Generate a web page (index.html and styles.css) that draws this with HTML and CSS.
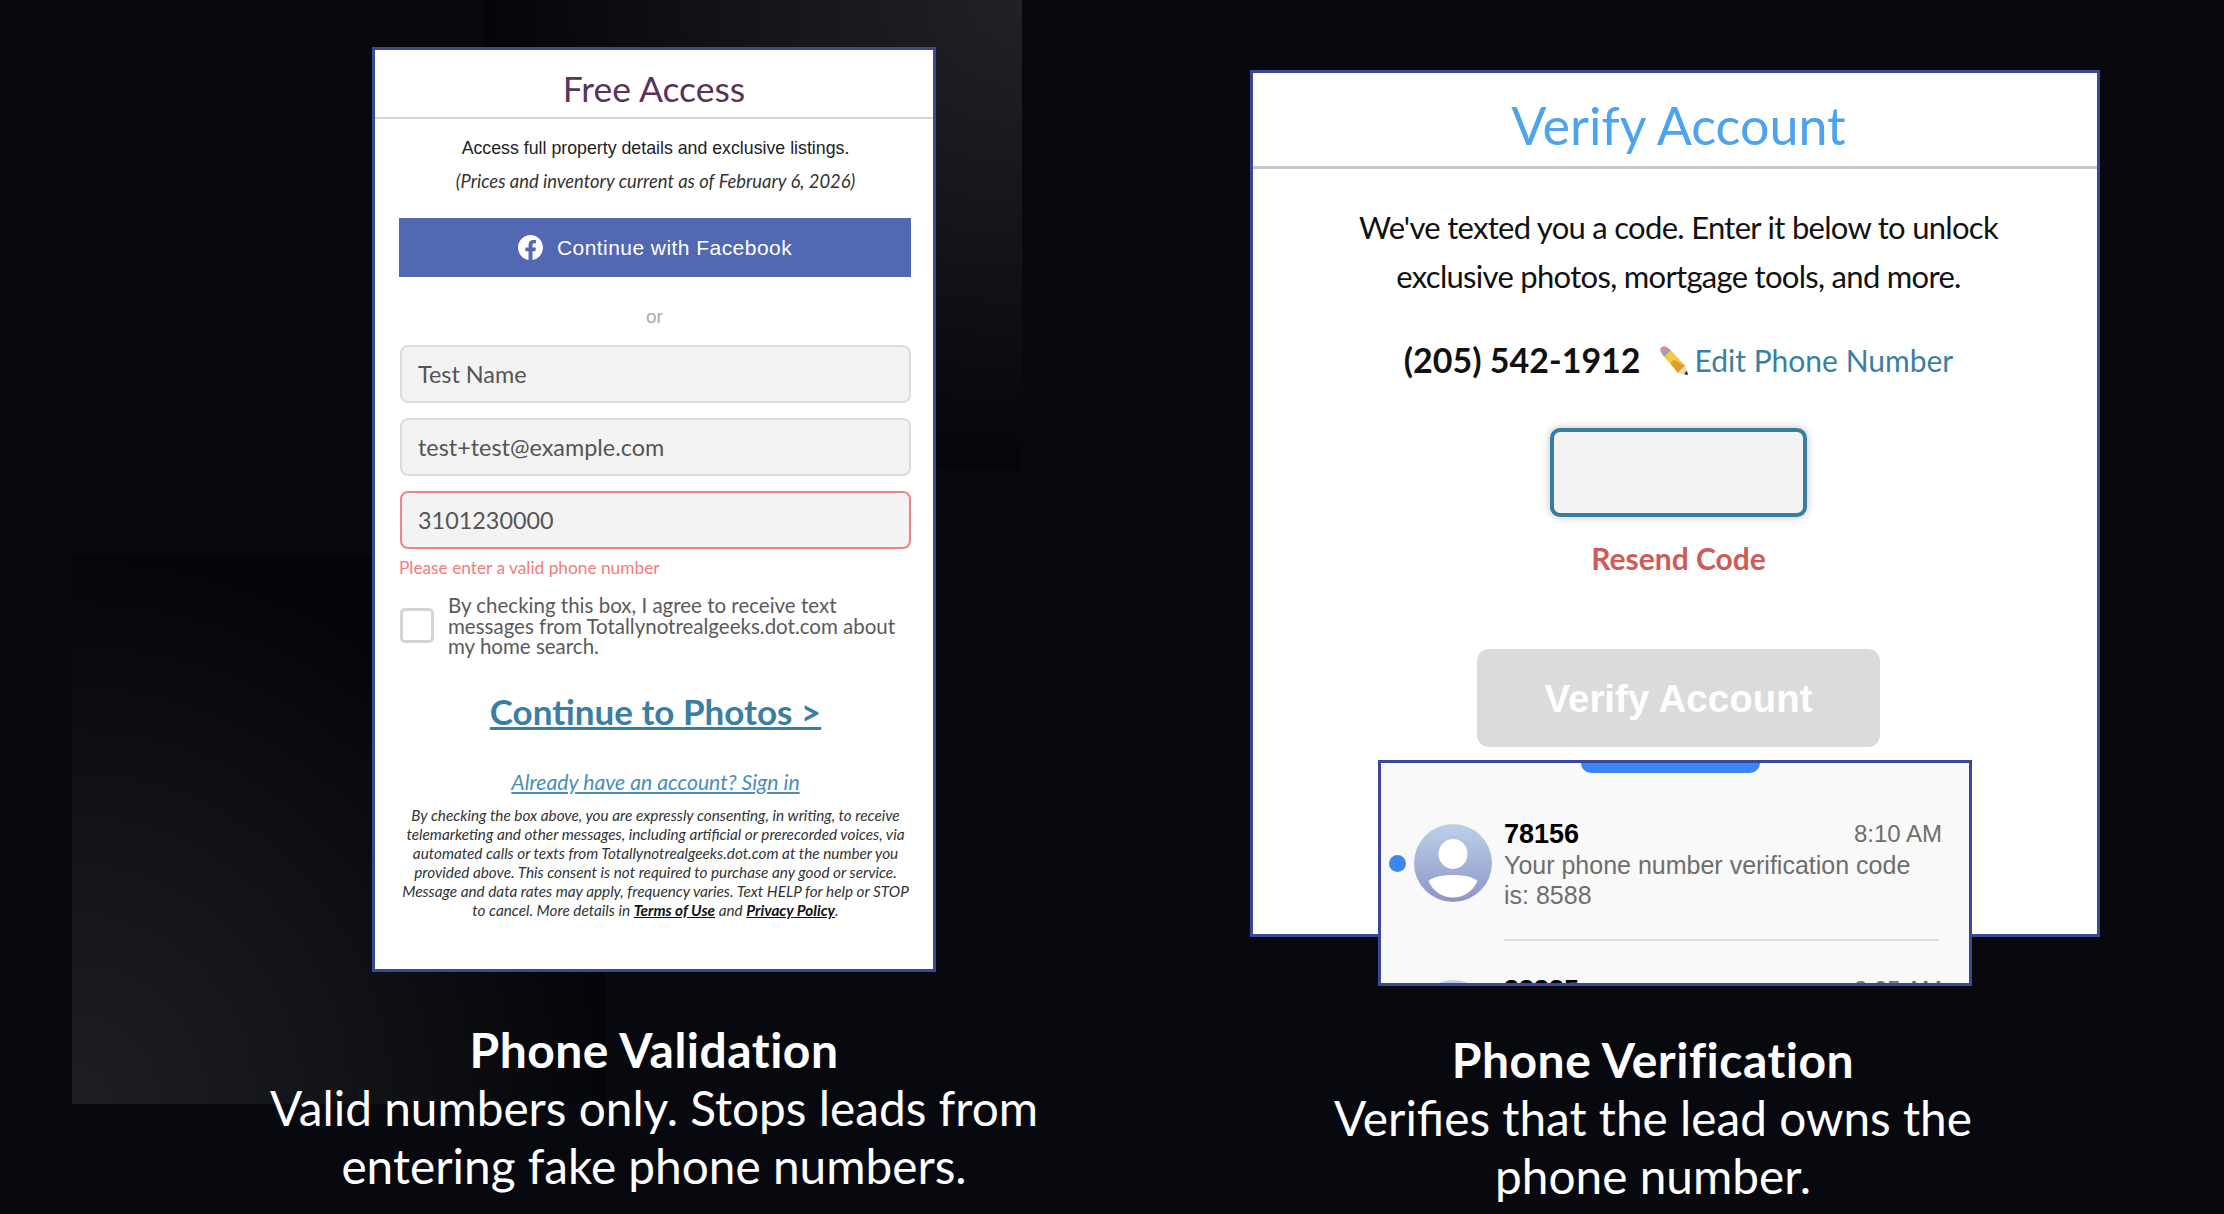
FILE: index.html
```html
<!doctype html>
<html lang="en">
    <head>
        <meta charset="UTF-8" />
        <meta name="viewport" content="width=device-width, initial-scale=1.0" />
        <title>Phone Validation and Verification</title>
        <link rel="stylesheet" href="styles.css">
    </head>
    <body>
        <div class="page">
            <section class="column column-left">
                <div class="card access-card">
                    <h2 class="access-title">Free Access</h2>
                    <div class="access-body">
                        <p class="access-intro">Access full property details and exclusive listings.</p>
                        <p class="access-note">(Prices and inventory current as of February 6, 2026)</p>
                        <a class="fb-btn">
                            <svg class="fb-icon" viewBox="0 0 24 24"><path fill="#fff" d="M24 12.073c0-6.627-5.373-12-12-12s-12 5.373-12 12c0 5.99 4.388 10.954 10.125 11.854v-8.385H7.078v-3.47h3.047V9.43c0-3.007 1.792-4.669 4.533-4.669 1.312 0 2.686.235 2.686.235v2.953H15.83c-1.491 0-1.956.925-1.956 1.874v2.25h3.328l-.532 3.47h-2.796v8.385C19.612 23.027 24 18.062 24 12.073z"/></svg>
                            Continue with Facebook
                        </a>
                        <div class="or">or</div>
                        <div class="field">Test Name</div>
                        <div class="field">test+test@example.com</div>
                        <div class="field field-error">3101230000</div>
                        <div class="error-text">Please enter a valid phone number</div>
                        <div class="consent">
                            <span class="checkbox"></span>
                            <span class="consent-text">By checking this box, I agree to receive text<br>messages from Totallynotrealgeeks.dot.com about<br>my home search.</span>
                        </div>
                        <a class="continue-link">Continue to Photos &gt;</a>
                        <a class="signin-link">Already have an account? Sign in</a>
                        <p class="legal">By checking the box above, you are expressly consenting, in writing, to receive<br>telemarketing and other messages, including artificial or prerecorded voices, via<br>automated calls or texts from Totallynotrealgeeks.dot.com at the number you<br>provided above. This consent is not required to purchase any good or service.<br>Message and data rates may apply, frequency varies. Text HELP for help or STOP<br>to cancel. More details in <b>Terms of Use</b> and <b>Privacy Policy</b>.</p>
                    </div>
                </div>
                <div class="caption">
                    <strong>Phone Validation</strong>
                    <span>Valid numbers only. Stops leads from<br>entering fake phone numbers.</span>
                </div>
            </section>

            <section class="column column-right">
                <div class="card verify-card">
                    <h2 class="verify-title">Verify Account</h2>
                    <div class="verify-body">
                        <p class="verify-text">We've texted you a code. Enter it below to unlock<br>exclusive photos, mortgage tools, and more.</p>
                        <div class="phone-row">
                            <span class="phone-number">(205) 542-1912</span>
                            <svg class="pencil" viewBox="0 0 32 32">
                                <polygon fill="#f6c945" points="10.500,3.500 26.900,21.100 19.100,28.900 3.500,10.500"/>
                                <polygon fill="#dd9f2e" points="15,15 26.900,21.100 19.100,28.900 11,18"/>
                                <polygon fill="#efd9a8" points="26.900,21.100 30,31 19.100,28.900"/>
                                <polygon fill="#333" points="28.700,26.500 30,31 25.500,30"/>
                                <polygon fill="#8fa5bd" points="8,1.500 11.500,4.500 4.500,11.500 1.500,8"/>
                                <path fill="#e58a9a" d="M.8 6.500C-1 2 2.500 -1 6.500 .8L8 2 2 8z"/>
                            </svg>
                            <span class="edit-link">Edit Phone Number</span>
                        </div>
                        <div class="code-input"></div>
                        <div class="resend">Resend Code</div>
                        <div class="verify-btn">Verify Account</div>
                    </div>
                    <div class="sms-popup">
                        <div class="sms-tab"></div>
                        <div class="sms-row">
                            <span class="sms-dot"></span>
                            <svg class="sms-avatar" viewBox="0 0 78 78">
                                <defs>
                                    <linearGradient id="avatar-fill" x1="0" y1="0" x2="0" y2="1">
                                        <stop offset="0" stop-color="#bdd0e8"/>
                                        <stop offset="1" stop-color="#8c96c8"/>
                                    </linearGradient>
                                </defs>
                                <circle cx="39" cy="39" r="39" fill="url(#avatar-fill)"/>
                                <ellipse cx="39" cy="30" rx="14.500" ry="15" fill="#fff"/>
                                <path fill="#fff" d="M14.500 57C22 49 56 49 63.500 57C54 79 24 79 14.500 57z"/>
                            </svg>
                            <div class="sms-content">
                                <div class="sms-head"><b>78156</b><span>8:10 AM</span></div>
                                <div class="sms-message">Your phone number verification code<br>is: 8588</div>
                            </div>
                        </div>
                        <div class="sms-divider"></div>
                        <div class="sms-row sms-row-next">
                            <span class="sms-dot-spacer"></span>
                            <svg class="sms-avatar" viewBox="0 0 78 78"><circle cx="39" cy="39" r="39" fill="url(#avatar-fill)"/></svg>
                            <div class="sms-content">
                                <div class="sms-head"><b>33335</b><span>8:05 AM</span></div>
                            </div>
                        </div>
                    </div>
                </div>
                <div class="caption caption-right">
                    <strong>Phone Verification</strong>
                    <span>Verifies that the lead owns the<br>phone number.</span>
                </div>
            </section>
        </div>
    </body>
</html>
```
FILE: styles.css
```css
html,
body {
    height: 100%;
}
body {
    margin: 0;
    font-family: "Lato", "Liberation Sans", sans-serif;
    background-color: #07090f;
    background-image:
        radial-gradient(ellipse 540px 480px at 100% 0, #212226 0%, #14161a 45%, #040508 100%),
        radial-gradient(ellipse 540px 560px at 0 100%, #1d1f22 0%, #111316 50%, #040508 100%);
    background-repeat: no-repeat;
    background-size: 537px 470px, 533px 549px;
    background-position: 485px 0, 72px 555px;
    overflow: hidden;
}
.page {
    display: flex;
    gap: 204px;
    padding-left: 262px;
}
.column {
    display: flex;
    flex-direction: column;
    align-items: center;
}
.column-left {
    width: 784px;
    padding-top: 47px;
}
.column-right {
    width: 850px;
    padding-top: 70px;
}
.card {
    box-sizing: border-box;
    background: #fff;
    border: 3px solid #3b479b;
}

/* left form */
.access-card {
    width: 564px;
    height: 925px;
}
.access-title {
    margin: 0;
    height: 69px;
    box-sizing: border-box;
    padding-top: 16px;
    border-bottom: 2px solid #d3d6da;
    text-align: center;
    font-size: 35.500px;
    line-height: 46px;
    font-weight: 400;
    color: #5a3358;
}
.access-body {
    padding: 0 22px 0 25px;
    text-align: center;
}
.access-intro {
    margin: 16px 0 0;
    font-family: "Liberation Sans", Arial, sans-serif;
    font-size: 17.750px;
    line-height: 26px;
    color: #222;
}
.access-note {
    margin: 7px 0 0;
    font-size: 18.400px;
    line-height: 26px;
    font-style: italic;
    color: #333;
}
.fb-btn {
    display: flex;
    align-items: center;
    justify-content: center;
    gap: 14px;
    height: 59px;
    margin: 24px 0 0 -1px;
    background: #5268b2;
    color: #fff;
    font-family: "Liberation Sans", Arial, sans-serif;
    font-size: 21px;
    letter-spacing: 0.450px;
}
.fb-icon {
    width: 25px;
    height: 25px;
}
.or {
    margin-top: 28px;
    height: 40px;
    padding-right: 2px;
    font-family: "Liberation Sans", Arial, sans-serif;
    font-size: 19px;
    line-height: 24px;
    color: #aaa;
}
.field {
    box-sizing: border-box;
    height: 58px;
    margin-bottom: 15px;
    padding-left: 16px;
    background: #f3f3f3;
    border: 2px solid #dcdcdc;
    border-radius: 8px;
    text-align: left;
    font-size: 23.400px;
    line-height: 54px;
    color: #555;
}
.field-error {
    margin-bottom: 0;
    border-color: #f08484;
}
.error-text {
    margin: 8px 0 0 -1px;
    text-align: left;
    font-size: 17.300px;
    line-height: 22px;
    color: #f27c7c;
}
.consent {
    display: flex;
    align-items: center;
    gap: 14px;
    margin-top: 16px;
    text-align: left;
}
.checkbox {
    flex: none;
    box-sizing: border-box;
    width: 34px;
    height: 35px;
    background: #fff;
    border: 3px solid #d4d4d4;
    border-radius: 5px;
}
.consent-text {
    font-size: 20.500px;
    line-height: 20.500px;
    color: #5a5a5a;
    white-space: nowrap;
}
.continue-link {
    display: block;
    margin-top: 32px;
    font-size: 35px;
    line-height: 44px;
    font-weight: 700;
    color: #3a7fa3;
    text-decoration: underline;
    text-decoration-thickness: 3px;
}
.signin-link {
    display: block;
    margin-top: 35px;
    font-size: 21.200px;
    line-height: 28px;
    font-style: italic;
    color: #4a8eb5;
    text-decoration: underline;
}
.legal {
    margin: 10px -6px 0 -6px;
    font-size: 15.300px;
    line-height: 19px;
    font-style: italic;
    color: #333;
    white-space: nowrap;
}
.legal b {
    color: #111;
    text-decoration: underline;
}

/* captions */
.caption {
    display: flex;
    flex-direction: column;
    align-items: center;
    margin-top: 49px;
    text-align: center;
    color: #fff;
    font-size: 47.750px;
    line-height: 58px;
}
.caption strong {
    font-size: 48px;
    font-weight: 700;
    letter-spacing: 0.500px;
}
.caption-right {
    margin-top: 94px;
    padding-right: 44px;
}

/* right verify panel */
.verify-card {
    position: relative;
    width: 850px;
    height: 867px;
    text-align: center;
}
.verify-title {
    margin: 0;
    height: 96px;
    box-sizing: border-box;
    padding: 21px 0 0 7px;
    border-bottom: 3px solid #c6cad0;
    font-size: 52px;
    line-height: 62px;
    font-weight: 400;
    color: #4da3ee;
}
.verify-body {
    padding-left: 7px;
}
.verify-text {
    margin: 34px 0 0;
    font-size: 31px;
    line-height: 48.500px;
    letter-spacing: -0.700px;
    color: #111;
}
.phone-row {
    display: flex;
    align-items: center;
    justify-content: center;
    height: 44px;
    margin-top: 37px;
}
.phone-number {
    font-size: 34px;
    font-weight: 700;
    color: #111;
}
.pencil {
    width: 30px;
    height: 30px;
    margin: 4px 5px 0 19px;
}
.edit-link {
    margin-top: 1px;
    font-size: 30px;
    color: #3a7fa3;
}
.code-input {
    box-sizing: border-box;
    width: 257px;
    height: 89px;
    margin: 47px auto 0;
    background: #f3f3f3;
    border: 4px solid #377ea0;
    border-radius: 10px;
    box-shadow: 0 0 8px rgba(0, 0, 0, 0.25);
}
.resend {
    margin-top: 21px;
    font-size: 30px;
    line-height: 40px;
    font-weight: 700;
    color: #cd5c57;
}
.verify-btn {
    width: 403px;
    height: 98px;
    margin: 71px auto 0;
    background: #dbdbdb;
    border-radius: 12px;
    font-family: "Liberation Sans", Arial, sans-serif;
    font-size: 38.500px;
    font-weight: 700;
    line-height: 100px;
    color: #fff;
}

/* sms popup lies over the card */
.sms-popup {
    position: absolute;
    left: 125px;
    top: 687px;
    box-sizing: border-box;
    width: 594px;
    height: 226px;
    overflow: hidden;
    background: #f9f9f9;
    border: 3px solid #3b479b;
    font-family: "Liberation Sans", Arial, sans-serif;
    text-align: left;
}
.sms-tab {
    width: 179px;
    height: 10px;
    margin-left: 200px;
    background: #3b88f5;
    border-radius: 0 0 10px 10px;
}
.sms-row {
    display: flex;
    align-items: flex-start;
    margin-top: 51px;
}
.sms-dot {
    flex: none;
    width: 17px;
    height: 17px;
    margin: 31px 0 0 8px;
    background: #3b88f5;
    border-radius: 50%;
}
.sms-avatar {
    flex: none;
    width: 78px;
    height: 78px;
    margin-left: 8px;
}
.sms-content {
    width: 438px;
    margin: -4px 0 0 12px;
}
.sms-head {
    display: flex;
    justify-content: space-between;
    font-size: 24px;
    line-height: 28px;
    color: #6e6e6e;
}
.sms-head b {
    font-size: 27px;
    color: #000;
}
.sms-message {
    margin-top: 3px;
    font-size: 25px;
    line-height: 29.500px;
    color: #6e6e6e;
}
.sms-divider {
    width: 435px;
    height: 2px;
    margin: 29px 0 0 123px;
    background: #dedede;
}
.sms-row-next {
    margin-top: 39px;
}
.sms-dot-spacer {
    flex: none;
    width: 25px;
}
```
